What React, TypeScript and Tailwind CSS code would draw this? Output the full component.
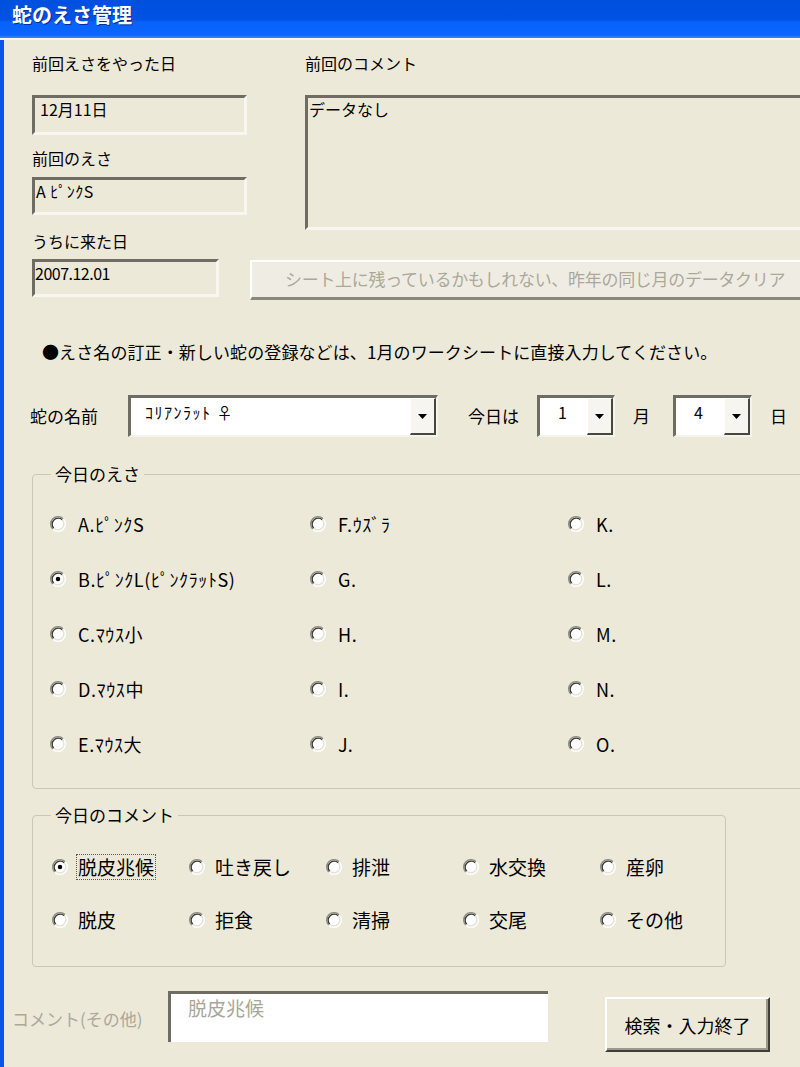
import React from 'react';

const eatColumns: string[][] = [
  ['A.ﾋﾟﾝｸS', 'B.ﾋﾟﾝｸL(ﾋﾟﾝｸﾗｯﾄS)', 'C.ﾏｳｽ小', 'D.ﾏｳｽ中', 'E.ﾏｳｽ大'],
  ['F.ｳｽﾞﾗ', 'G.', 'H.', 'I.', 'J.'],
  ['K.', 'L.', 'M.', 'N.', 'O.'],
];

const commentRows: string[][] = [
  ['脱皮兆候', '吐き戻し', '排泄', '水交換', '産卵'],
  ['脱皮', '拒食', '清掃', '交尾', 'その他'],
];

function Radio({ checked }: { checked?: boolean }) {
  return (
    <svg viewBox="0 0 12 12" className="w-[16px] h-[16px] shrink-0">
      <circle cx="6" cy="6" r="5" fill="#fff" />
      <path d="M9.89 2.11A5.5 5.5 0 0 0 2.11 9.89" fill="none" stroke="#8c8a7e" strokeWidth="1" />
      <path d="M9.18 2.82A4.5 4.5 0 0 0 2.82 9.18" fill="none" stroke="#3a3a36" strokeWidth="1" />
      <path d="M2.11 9.89A5.5 5.5 0 0 0 9.89 2.11" fill="none" stroke="#ffffff" strokeWidth="1" />
      <path d="M2.82 9.18A4.5 4.5 0 0 0 9.18 2.82" fill="none" stroke="#e4e2d6" strokeWidth="1" />
      {checked && <circle cx="6" cy="6" r="1.7" fill="#000" />}
    </svg>
  );
}

function Combo({ width, value, textClass }: { width: string; value: string; textClass: string }) {
  return (
    <div className={`${width} h-[42px] flex bg-white border-t-[3px] border-l-[3px] border-t-[#6f6d63] border-l-[#6f6d63] border-r-2 border-b-2 border-r-[#f4f3ee] border-b-[#f4f3ee]`}>
      <div className={`flex-1 text-[16px] leading-[22px] pt-[3px] whitespace-nowrap ${textClass}`}>{value}</div>
      <div className="w-[26px] h-full flex items-center justify-center bg-[#f6f5f0] border-t border-l border-white border-r-2 border-b-2 border-r-[#47463f] border-b-[#47463f]">
        <svg viewBox="0 0 9 5" className="w-[9px] h-[5px]">
          <path d="M0 0H9L4.5 5Z" fill="#000" />
        </svg>
      </div>
    </div>
  );
}

export default function App() {
  return (
    <div className="w-[800px] h-[1067px] overflow-hidden bg-[#ece9d8] text-black font-['Noto_Sans_CJK_JP','Noto_Sans',sans-serif]">
      {/* タイトルバー */}
      <div className="h-[38px] bg-[linear-gradient(180deg,#0050df_0%,#0052e2_52%,#0862fb_58%,#0a66ff_92%,#3d86f4_100%)] pl-[12px] flex items-start">
        <span className="text-white font-bold text-[20px] leading-[30px] [text-shadow:1px_1px_0_#0b2a9a]">蛇のえさ管理</span>
      </div>
      <div className="h-[2px] bg-[#f7f6ef]" />

      <div className="h-[1027px] border-l-4 border-l-[#0a55e8] pl-[28px] pt-[13px]">
        {/* 上段 */}
        <div className="flex">
          <div className="w-[215px] shrink-0">
            <div className="text-[16px] leading-[20px]">前回えさをやった日</div>
            <div className="mt-[22px] h-[40px] border-t-[3px] border-l-[3px] border-[#6f6d63] border-r-[3px] border-b-[3px] border-r-[#f7f6f0] border-b-[#f7f6f0] pl-[5px] text-[16px] leading-[22px]">12月11日</div>
            <div className="mt-[13px] text-[16px] leading-[20px]">前回のえさ</div>
            <div className="mt-[9px] h-[38px] border-t-[3px] border-l-[3px] border-[#6f6d63] border-r-[3px] border-b-[3px] border-r-[#f7f6f0] border-b-[#f7f6f0] pl-[1px] text-[16px] leading-[22px] tracking-[0.5px]">A ﾋﾟﾝｸS</div>
          </div>
          <div className="ml-[58px] shrink-0">
            <div className="text-[16px] leading-[20px]">前回のコメント</div>
            <div className="mt-[22px] w-[600px] h-[135px] border-t-[3px] border-l-[3px] border-[#6f6d63] border-b-[3px] border-b-[#f7f6f0] pl-[1px] text-[16px] leading-[22px]">データなし</div>
          </div>
        </div>

        <div className="mt-[1px] text-[16px] leading-[20px]">うちに来た日</div>
        <div className="mt-[8px] flex items-start">
          <div className="w-[187px] h-[38px] shrink-0 border-t-[3px] border-l-[3px] border-[#6f6d63] border-r-[3px] border-b-[3px] border-r-[#f7f6f0] border-b-[#f7f6f0] text-[16px] leading-[22px] tracking-[-0.5px]">2007.12.01</div>
          <div className="ml-[31px] mt-[1px] w-[600px] h-[40px] shrink-0 bg-[#efede3] border-t-2 border-l-2 border-white border-b-[3px] border-b-[#8a887b] pl-[33px] text-[17px] leading-[34px] tracking-[-0.3px] text-[#aca899] whitespace-nowrap">
            シート上に残っているかもしれない、昨年の同じ月のデータクリア
          </div>
        </div>

        {/* 注意書き */}
        <div className="mt-[40px] ml-[10px] text-[17px] leading-[24px] tracking-[0.1px] whitespace-nowrap">
          ●えさ名の訂正・新しい蛇の登録などは、1月のワークシートに直接入力してください。
        </div>

        {/* 蛇の名前 / 日付 */}
        <div className="mt-[31px] -ml-[2px] flex items-center text-[17px] leading-[22px]">
          <span>蛇の名前</span>
          <div className="ml-[30px]">
            <Combo width="w-[310px]" value="ｺﾘｱﾝﾗｯﾄ ♀" textClass="pl-[14px] tracking-[1.5px]" />
          </div>
          <span className="ml-[30px]">今日は</span>
          <div className="ml-[18px]">
            <Combo width="w-[78px]" value="1" textClass="pl-[18px]" />
          </div>
          <span className="ml-[18px]">月</span>
          <div className="ml-[23px]">
            <Combo width="w-[79px]" value="4" textClass="pl-[18px]" />
          </div>
          <span className="ml-[18px]">日</span>
        </div>

        {/* 今日のえさ */}
        <fieldset className="mt-[27px] w-[800px] border border-[#cac7b6] rounded-[4px] p-0">
          <legend className="ml-[18px] px-[4px] text-[17px] leading-[20px]">今日のえさ</legend>
          <div className="pt-[12px] pb-[17px] pl-[17px] grid grid-cols-[260px_258px_1fr]">
            {eatColumns.map((col, ci) => (
              <div key={ci} className="flex flex-col">
                {col.map((label) => (
                  <div key={label} className="h-[55px] flex items-center gap-[12px]">
                    <Radio checked={label.startsWith('B.')} />
                    <span className="text-[18px] leading-[22px] tracking-[0.6px] whitespace-nowrap">{label}</span>
                  </div>
                ))}
              </div>
            ))}
          </div>
        </fieldset>

        {/* 今日のコメント */}
        <fieldset className="mt-[16px] w-[694px] border border-[#cac7b6] rounded-[4px] p-0">
          <legend className="ml-[18px] px-[4px] text-[17px] leading-[20px]">今日のコメント</legend>
          <div className="pt-[15px] pb-[20px] pl-[19px]">
            {commentRows.map((row, ri) => (
              <div key={ri} className="h-[53px] grid grid-cols-[137px_137px_137px_137px_1fr]">
                {row.map((label) => (
                  <div key={label} className="flex items-center gap-[8px]">
                    <Radio checked={label === '脱皮兆候'} />
                    {label === '脱皮兆候' ? (
                      <span className="border border-dotted border-[#5a5a55] px-[1px] text-[19px] leading-[24px]">{label}</span>
                    ) : (
                      <span className="px-[2px] text-[19px] leading-[24px]">{label}</span>
                    )}
                  </div>
                ))}
              </div>
            ))}
          </div>
        </fieldset>

        {/* コメント入力 */}
        <div className="-ml-[20px] flex items-start">
          <div className="w-[156px] mt-[41px] text-[17px] leading-[22px] text-[#aca899] whitespace-nowrap">コメント(その他)</div>
          <div className="mt-[24px] w-[380px] h-[51px] bg-white border-t-[3px] border-l-[3px] border-[#6f6d63] border-r-0 border-b-0 pl-[17px] pt-[2px] text-[19px] leading-[24px] text-[#a8a699]">
            脱皮兆候
          </div>
          <div className="ml-[57px] mt-[30px] w-[165px] h-[55px] bg-[#ece9d8] border-t-2 border-l-2 border-white border-r-2 border-b-2 border-r-[#3f3e39] border-b-[#3f3e39] shadow-[inset_-2px_-2px_0_#9b998c] flex items-center justify-center text-[18px] leading-[24px]">
            検索・入力終了
          </div>
        </div>
      </div>
    </div>
  );
}
